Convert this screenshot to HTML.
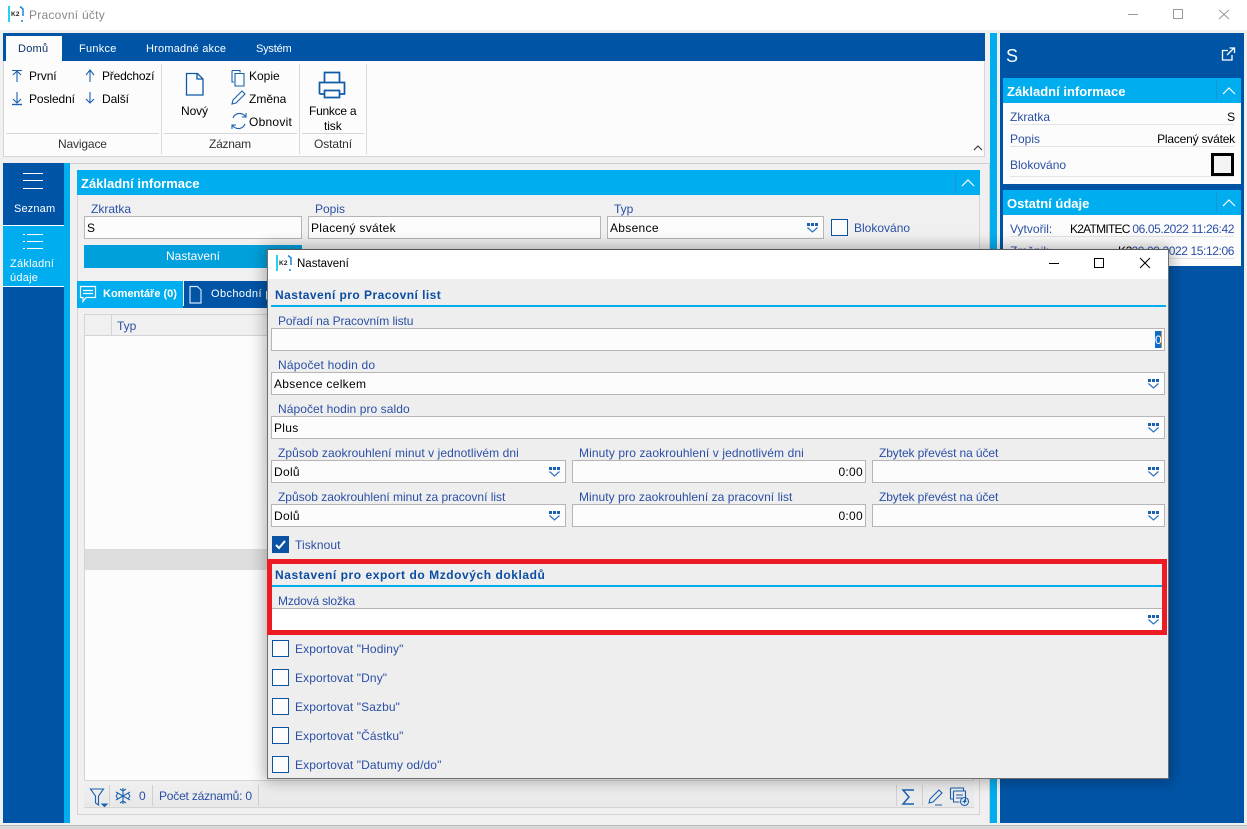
<!DOCTYPE html>
<html><head><meta charset="utf-8"><style>
html,body{margin:0;padding:0;width:1247px;height:829px;overflow:hidden;background:#f0f0f0}
*{box-sizing:border-box}
body{font-family:"Liberation Sans",sans-serif;font-size:12px;position:relative;color:#000}
.a,.t,.l,.b,.i,.c,.d{position:absolute}
.t{white-space:nowrap;line-height:16px;letter-spacing:-.1px}
.l{white-space:nowrap;line-height:14px;color:#2a4fa5;letter-spacing:0}
.i{background:#fcfcfc;border:1px solid #b5b5b5;line-height:22px;padding-left:2px;white-space:nowrap;letter-spacing:.3px;color:#000}
.h{position:absolute;background:#00aeef;color:#fff;font-weight:bold;font-size:13px;line-height:27px;padding-left:4px;letter-spacing:0;white-space:nowrap}
.c{width:17px;height:17px;background:#fcfcfc;border:1px solid #0b52a3}
.st{position:absolute;font-weight:bold;color:#0b4da2;white-space:nowrap;letter-spacing:.45px;line-height:16px}
svg{position:absolute;overflow:visible;fill:none}
.ri{stroke:#1a60b0;stroke-width:1.1}
</style></head><body>
<!-- title bar -->
<div class="a" style="left:0;top:0;width:1247px;height:30px;background:#fff"></div>
<div class="a" style="left:8px;top:6px;width:2px;height:16px;background:#1fd6ee"></div>
<div class="t" style="left:11px;top:10px;font-size:6.500px;font-weight:bold;line-height:9px;letter-spacing:.2px;color:#222">K2</div>
<svg style="left:18px;top:6px" width="7" height="17"><path d="M2 .5 5 3V10M5 15H3" stroke="#1c86d8" stroke-width="1.5"/></svg>
<div class="t" style="left:29px;top:7px;color:#8a8a8a;letter-spacing:.25px">Pracovní účty</div>
<svg style="left:1120px;top:5px" width="120" height="20"><path d="M8 9.5H18" stroke="#999"/><path d="M53.500 4.500h9v9h-9z" stroke="#999"/><path d="M99 5 109 14M109 5 99 14" stroke="#999"/></svg>

<!-- ribbon -->
<div class="a" style="left:3px;top:33px;width:982px;height:28px;background:#0054a6"></div>
<div class="a" style="left:6px;top:36px;width:56px;height:25px;background:#fcfcfc"></div>
<div class="t" style="left:18px;top:41px;font-size:11px;color:#0b2f6b;letter-spacing:.25px">Domů</div>
<div class="t" style="left:79px;top:41px;font-size:11px;color:#fff;letter-spacing:.25px">Funkce</div>
<div class="t" style="left:146px;top:41px;font-size:11px;color:#fff;letter-spacing:.2px">Hromadné akce</div>
<div class="t" style="left:256px;top:41px;font-size:11px;color:#fff;letter-spacing:-.2px">Systém</div>
<div class="a" style="left:3px;top:61px;width:982px;height:96px;background:#fcfcfc;border:1px solid #d6d6d6;border-top:0"></div>
<div class="a" style="left:161px;top:64px;width:1px;height:90px;background:#d8d8d8"></div>
<div class="a" style="left:299px;top:64px;width:1px;height:90px;background:#d8d8d8"></div>
<div class="a" style="left:366px;top:64px;width:1px;height:90px;background:#d8d8d8"></div>
<div class="a" style="left:6px;top:133px;width:153px;height:1px;background:#d8d8d8"></div>
<div class="a" style="left:164px;top:133px;width:133px;height:1px;background:#d8d8d8"></div>
<div class="a" style="left:302px;top:133px;width:62px;height:1px;background:#d8d8d8"></div>
<div class="t" style="left:29px;top:68px">První</div>
<div class="t" style="left:102px;top:68px;letter-spacing:-.2px">Předchozí</div>
<div class="t" style="left:29px;top:91px">Poslední</div>
<div class="t" style="left:102px;top:91px">Další</div>
<div class="t" style="left:249px;top:68px;letter-spacing:0">Kopie</div>
<div class="t" style="left:249px;top:91px;letter-spacing:0">Změna</div>
<div class="t" style="left:249px;top:114px;letter-spacing:.25px">Obnovit</div>
<div class="t" style="left:181px;top:103px">Nový</div>
<div class="t" style="left:309px;top:103px;letter-spacing:-.25px">Funkce a</div>
<div class="t" style="left:324px;top:118px">tisk</div>
<div class="t" style="left:58px;top:136px;color:#333;letter-spacing:-.15px">Navigace</div>
<div class="t" style="left:209px;top:136px;color:#333;letter-spacing:-.25px">Záznam</div>
<div class="t" style="left:314px;top:136px;color:#333;letter-spacing:-.1px">Ostatní</div>
<svg style="left:0;top:60px" width="380" height="100" class="ri">
<path d="M12 10.500H22M17 12V22M13 15l4-4 4 4"/>
<path d="M86 15l4-5 4 5M90 10V22"/>
<path d="M12 44.500H22" stroke-width="1.400"/><path d="M17 32V43M13 39l4 4 4-4"/>
<path d="M86 39l4 4 4-4M90 32V43"/>
<path d="M186.500 13.500h11l5.500 5.500v16h-16.500zM197 13.500V19h6" stroke="#0d5aa8" stroke-width="1.300"/>
<path d="M232 10.500h8v2M232 10.500V22h2M235 13.500h9V26h-9z"/>
<path d="M232 44l1-4 9-9 3 3-9 9z"/>
<path d="M233 58a7 7 0 0 1 11-3l2 2M245 64a7 7 0 0 1-11 3l-2-2M246 53v4h-4M232 69v-4h4"/>
<path d="M324.500 22V12.500h15V22M319.500 34V22.500h25V34h-5M324.500 34h-5M324.500 30.500h15v7h-15z" stroke="#0d5aa8" stroke-width="1.700"/>
<path d="M974 90l4-4 4 4" stroke="#333"/>
</svg>

<!-- left nav -->
<div class="a" style="left:3px;top:163px;width:61px;height:660px;background:#0054a6"></div>
<div class="a" style="left:3px;top:225px;width:61px;height:62px;background:#00aeef;border-top:1px solid #fff;border-bottom:1px solid #fff"></div>
<div class="a" style="left:64px;top:163px;width:6px;height:660px;background:#00aeef"></div>
<svg style="left:0;top:160px" width="64" height="90" stroke="#fff"><path d="M23 13.500H43M23 20.500H43M23 28.500H43"/><path d="M27 74.500H43M27 81.500H43M27 88.500H43M23 74.500H25M23 81.500H25M23 88.500H25"/></svg>
<div class="t" style="left:14px;top:201px;font-size:11px;color:#fff;letter-spacing:.15px">Seznam</div>
<div class="t" style="left:10px;top:257px;font-size:11px;color:#fff;line-height:14px;letter-spacing:.25px">Základní<br>údaje</div>

<!-- content -->
<div class="a" style="left:70px;top:163px;width:920px;height:660px;background:#f0f0f0;border-top:1px solid #d0d0d0;border-right:1px solid #d0d0d0"></div>
<div class="a" style="left:77px;top:170px;width:903px;height:645px;border:1px solid #d4d4d4;border-top:0"></div>
<div class="h" style="left:77px;top:170px;width:903px;height:25px">Základní informace</div>
<div class="a" style="left:955px;top:172px;width:1px;height:21px;background:#1d95d0"></div>
<svg style="left:961px;top:178px" width="16" height="10"><path d="M1 8l6-6 6 6" stroke="#fff" stroke-width="1.200"/></svg>
<div class="l" style="left:91px;top:202px">Zkratka</div>
<div class="i" style="left:84px;top:216px;width:218px;height:23px">S</div>
<div class="l" style="left:315px;top:202px">Popis</div>
<div class="i" style="left:308px;top:216px;width:293px;height:23px">Placený svátek</div>
<div class="l" style="left:614px;top:202px">Typ</div>
<div class="i" style="left:607px;top:216px;width:217px;height:23px">Absence</div>
<div class="c" style="left:831px;top:219px"></div>
<div class="l" style="left:854px;top:221px">Blokováno</div>
<div class="a" style="left:84px;top:245px;width:218px;height:23px;background:#00a0dc;color:#fff;text-align:center;line-height:23px;letter-spacing:0">Nastavení</div>
<div class="a" style="left:77px;top:281px;width:903px;height:27px;background:#0054a6"></div>
<div class="a" style="left:77px;top:281px;width:106px;height:27px;background:#00aeef"></div>
<div class="a" style="left:183px;top:281px;width:1px;height:25px;background:#fff"></div>
<svg style="left:80px;top:285px" width="130" height="20" stroke="#fff" stroke-width="1.200"><path d="M.5 1.500h15v11H6l-3 4v-4H.5zM3 5.500h10M3 8.500h10"/><path d="M110 1.500h7.500l3.500 3.500V18h-11z" stroke="#cfe4f5"/></svg>
<div class="t" style="left:103px;top:286px;font-weight:bold;font-size:11px;color:#fff;letter-spacing:0">Komentáře (0)</div>
<div class="t" style="left:211px;top:286px;font-size:11px;color:#fff;letter-spacing:.4px">Obchodní případy</div>
<div class="a" style="left:84px;top:314px;width:890px;height:467px;background:#fcfcfc;border:1px solid #d4d4d4"></div>
<div class="a" style="left:85px;top:315px;width:888px;height:21px;background:#f0f0f0;border-bottom:1px solid #d4d4d4"></div>
<div class="a" style="left:111px;top:315px;width:1px;height:21px;background:#d4d4d4"></div>
<div class="l" style="left:117px;top:319px">Typ</div>
<div class="a" style="left:85px;top:549px;width:888px;height:21px;background:#dedede"></div>
<div class="a" style="left:84px;top:781px;width:890px;height:27px;background:linear-gradient(#f0f0f0,#e8e8e8);border-bottom:1px solid #d4d4d4"></div>
<div class="a" style="left:109px;top:785px;width:1px;height:21px;background:#d0d0d0"></div>
<div class="a" style="left:152px;top:785px;width:1px;height:21px;background:#d0d0d0"></div>
<div class="a" style="left:258px;top:785px;width:1px;height:21px;background:#d0d0d0"></div>
<div class="a" style="left:896px;top:785px;width:1px;height:21px;background:#d0d0d0"></div>
<div class="a" style="left:922px;top:785px;width:1px;height:21px;background:#d0d0d0"></div>
<svg style="left:0;top:770px" width="980" height="50" class="ri" stroke-width="1.300">
<path d="M90.500 19h13l-5 7v9l-3-2v-7z"/><path d="M102 34h5l-2.500 2.500z" fill="#1a60b0"/>
<path d="M123 18v16M116 22l14 8M130 22l-14 8M120 19l3 2 3-2M120 33l3-2 3 2M116 26l2-3M130 26l-2-3M116 26l2 3M130 26l-2 3"/>
<path d="M914 20h-11l6 7-6 7h11" stroke-width="1.500"/>
<path d="M929 33l1-4 9-9 3 3-9 9zM935 35h7"/>
<path d="M950.500 18h13v3M950.500 18v11h3M953.500 21h12v10M953.500 21v11h6M956 25h7M956 28h7"/><circle cx="964.500" cy="31.500" r="4"/><path d="M962.500 31.500h4M964.500 29.500v4"/>
</svg>
<div class="l" style="left:139px;top:789px">0</div>
<div class="l" style="left:159px;top:789px;letter-spacing:-.2px">Počet záznamů: 0</div>

<!-- splitter + right panel -->
<div class="a" style="left:990px;top:33px;width:7px;height:790px;background:#00aeef"></div>
<div class="a" style="left:1000px;top:33px;width:244px;height:790px;background:#0054a6"></div>
<div class="t" style="left:1006px;top:45px;font-size:18px;line-height:22px;color:#fff;letter-spacing:0">S</div>
<svg style="left:1221px;top:47px" width="16" height="14" stroke="#fff" stroke-width="1.300"><path d="M7 3.500H1.500v9.500H11V8M6 8l7-7M8.500 1H13.500V6"/></svg>
<div class="a" style="left:1003px;top:78px;width:238px;height:106px;background:#fcfcfc"></div>
<div class="h" style="left:1003px;top:78px;width:238px;height:25px">Základní informace</div>
<div class="a" style="left:1216px;top:80px;width:1px;height:21px;background:#1d95d0"></div>
<svg style="left:1222px;top:86px" width="16" height="10"><path d="M1 8l6-6 6 6" stroke="#fff" stroke-width="1.200"/></svg>
<div class="l" style="left:1010px;top:110px">Zkratka</div><div class="t" style="right:12px;top:109px">S</div>
<div class="a" style="left:1010px;top:124px;width:224px;height:1px;background:#e4e4e4"></div>
<div class="l" style="left:1010px;top:132px">Popis</div><div class="t" style="right:12px;top:131px;letter-spacing:-.2px">Placený svátek</div>
<div class="a" style="left:1010px;top:146px;width:224px;height:1px;background:#e4e4e4"></div>
<div class="l" style="left:1010px;top:158px">Blokováno</div>
<div class="a" style="left:1211px;top:153px;width:23px;height:23px;background:#f4f4f4;border:3px solid #000"></div>
<div class="a" style="left:1010px;top:176px;width:224px;height:1px;background:#e4e4e4"></div>
<div class="a" style="left:1003px;top:190px;width:238px;height:76px;background:#fcfcfc"></div>
<div class="h" style="left:1003px;top:190px;width:238px;height:25px">Ostatní údaje</div>
<div class="a" style="left:1216px;top:192px;width:1px;height:21px;background:#1d95d0"></div>
<svg style="left:1222px;top:198px" width="16" height="10"><path d="M1 8l6-6 6 6" stroke="#fff" stroke-width="1.200"/></svg>
<div class="l" style="left:1010px;top:222px">Vytvořil:</div>
<div class="t" style="left:1070px;top:221px;letter-spacing:-.75px">K2ATMITEC</div>
<div class="l" style="right:13px;top:222px;letter-spacing:-.4px">06.05.2022 11:26:42</div>
<div class="a" style="left:1010px;top:236px;width:224px;height:1px;background:#e4e4e4"></div>
<div class="l" style="left:1010px;top:244px">Změnil:</div>
<div class="t" style="left:1118px;top:243px;letter-spacing:-.4px">K2</div>
<div class="l" style="right:13px;top:244px;letter-spacing:-.4px">20.09.2022 15:12:06</div>
<div class="a" style="left:1010px;top:258px;width:224px;height:1px;background:#e4e4e4"></div>

<!-- dialog -->
<div class="a" style="left:267px;top:249px;width:902px;height:530px;background:#eeeeee;border:1px solid #6f6f6f;border-top-color:#555;box-shadow:0 0 14px 3px rgba(0,0,0,.28)"></div>
<div class="a" style="left:268px;top:250px;width:900px;height:29px;background:#fff"></div>
<div class="a" style="left:276px;top:255px;width:2px;height:16px;background:#1fd6ee"></div>
<div class="t" style="left:279px;top:259px;font-size:6.500px;font-weight:bold;line-height:9px;letter-spacing:.2px;color:#222">K2</div>
<svg style="left:286px;top:255px" width="7" height="17"><path d="M2 .5 5 3V10M5 15H3" stroke="#1c86d8" stroke-width="1.5"/></svg>
<div class="t" style="left:297px;top:256px;font-size:11.500px;letter-spacing:0">Nastavení</div>
<svg style="left:1040px;top:250px" width="125" height="25" stroke="#000"><path d="M9 13.500H19"/><path d="M54.500 8.500h9v9h-9z"/><path d="M100 8l10 10M110 8l-10 10"/></svg>

<div class="st" style="left:275px;top:287px;letter-spacing:.45px">Nastavení pro Pracovní list</div>
<div class="a" style="left:271px;top:305px;width:895px;height:2px;background:#00aeef"></div>
<div class="l" style="left:278px;top:314px;letter-spacing:-.08px">Pořadí na Pracovním listu</div>
<div class="i" style="left:271px;top:328px;width:894px;height:23px"></div>
<div class="a" style="left:1155px;top:331px;width:7px;height:17px;background:#0a6ed1;color:#fff;line-height:18px;font-size:12px;text-align:center;border-right:1px solid #e88a2a">0</div>
<div class="l" style="left:278px;top:358px;letter-spacing:.2px">Nápočet hodin do</div>
<div class="i" style="left:271px;top:372px;width:894px;height:23px">Absence celkem</div>
<div class="l" style="left:278px;top:402px;letter-spacing:.07px">Nápočet hodin pro saldo</div>
<div class="i" style="left:271px;top:416px;width:894px;height:23px">Plus</div>
<div class="l" style="left:278px;top:446px;letter-spacing:.08px">Způsob zaokrouhlení minut v jednotlivém dni</div>
<div class="i" style="left:271px;top:460px;width:295px;height:23px">Dolů</div>
<div class="l" style="left:579px;top:446px;letter-spacing:.1px">Minuty pro zaokrouhlení v jednotlivém dni</div>
<div class="i" style="left:572px;top:460px;width:294px;height:23px;text-align:right;padding-right:2px">0:00</div>
<div class="l" style="left:879px;top:446px;letter-spacing:-.1px">Zbytek převést na účet</div>
<div class="i" style="left:872px;top:460px;width:293px;height:23px"></div>
<div class="l" style="left:278px;top:490px;letter-spacing:-.02px">Způsob zaokrouhlení minut za pracovní list</div>
<div class="i" style="left:271px;top:504px;width:295px;height:23px">Dolů</div>
<div class="l" style="left:579px;top:490px;letter-spacing:.05px">Minuty pro zaokrouhlení za pracovní list</div>
<div class="i" style="left:572px;top:504px;width:294px;height:23px;text-align:right;padding-right:2px">0:00</div>
<div class="l" style="left:879px;top:490px;letter-spacing:-.1px">Zbytek převést na účet</div>
<div class="i" style="left:872px;top:504px;width:293px;height:23px"></div>
<div class="c" style="left:272px;top:536px;background:#0b52a3"></div>
<svg style="left:272px;top:536px" width="17" height="17"><path d="M4 9l3 3 6-7" stroke="#fff" stroke-width="2"/></svg>
<div class="l" style="left:295px;top:538px;letter-spacing:.08px">Tisknout</div>

<div class="st" style="left:275px;top:567px;letter-spacing:.56px">Nastavení pro export do Mzdových dokladů</div>
<div class="a" style="left:271px;top:585px;width:895px;height:2px;background:#00aeef"></div>
<div class="l" style="left:278px;top:594px;letter-spacing:-.18px">Mzdová složka</div>
<div class="i" style="left:271px;top:608px;width:894px;height:23px;border-left:0;border-right:0;background:#fff"></div>
<div class="a" style="left:267px;top:559px;width:900px;height:76px;border:5px solid #ed1c24"></div>

<div class="c" style="left:272px;top:640px"></div><div class="l" style="left:295px;top:642px;letter-spacing:.1px">Exportovat "Hodiny"</div>
<div class="c" style="left:272px;top:669px"></div><div class="l" style="left:295px;top:671px;letter-spacing:.1px">Exportovat "Dny"</div>
<div class="c" style="left:272px;top:698px"></div><div class="l" style="left:295px;top:700px;letter-spacing:.1px">Exportovat "Sazbu"</div>
<div class="c" style="left:272px;top:727px"></div><div class="l" style="left:295px;top:729px;letter-spacing:.1px">Exportovat "Částku"</div>
<div class="c" style="left:272px;top:756px"></div><div class="l" style="left:295px;top:758px;letter-spacing:.1px">Exportovat "Datumy od/do"</div>

<!-- combo arrows -->
<svg style="left:0;top:0" width="1247" height="829">
<defs><g id="ar"><path d="M0 0h3v3h-3zM4 0h3v3h-3zM8 0h3v3h-3z" fill="#1a60b0"/><path d="M.5 4.500 5.500 9 10.500 4.500" stroke="#2a70c0" stroke-width="1.200"/></g></defs>
<use href="#ar" x="807" y="223"/><use href="#ar" x="1148" y="379"/><use href="#ar" x="1148" y="423"/>
<use href="#ar" x="549" y="467"/><use href="#ar" x="1148" y="467"/><use href="#ar" x="549" y="511"/><use href="#ar" x="1148" y="511"/><use href="#ar" x="1148" y="615"/>
</svg>
<div class="a" style="left:0;top:825px;width:1247px;height:4px;background:#d8d8d8;border-top:1px solid #bbb"></div>
</body></html>
